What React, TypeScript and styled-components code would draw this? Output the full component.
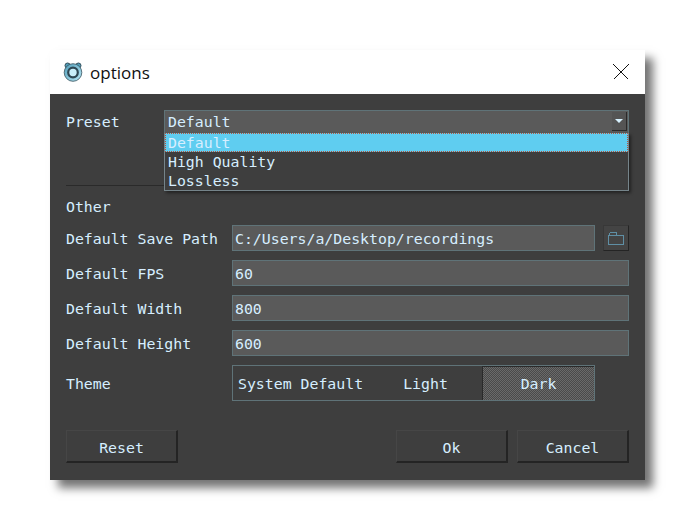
import styled, { createGlobalStyle } from "styled-components";

const GlobalStyle = createGlobalStyle`
	html, body {
		margin: 0;
		padding: 0;
		background: #ffffff;
	}
`;

const Page = styled.div`
	width: 695px;
	height: 530px;
	padding: 50px 0 0 50px;
	box-sizing: border-box;
	overflow: hidden;
`;

const Window = styled.div`
	width: 595px;
	height: 430px;
	display: flex;
	flex-direction: column;
	box-shadow: 8px 8px 9px rgba(0, 0, 0, 0.55);
`;

const TitleBar = styled.div`
	height: 44px;
	flex-shrink: 0;
	background: #ffffff;
	display: flex;
	align-items: center;
	padding: 0 16px 0 13px;
	gap: 7px;
`;

const Title = styled.span`
	flex: 1;
	font-family: "Open Sans", "Noto Sans", sans-serif;
	font-size: 17px;
	color: #111111;
`;

const Body = styled.div`
	flex: 1;
	background: #3e3e3e;
	padding: 16px 16px 17px 16px;
	display: flex;
	flex-direction: column;
	font-family: "DejaVu Sans Mono", monospace;
	font-size: 14.85px;
	color: #d6eeff;
`;

const PresetRow = styled.div`
	display: flex;
	height: 24px;
	position: relative;
`;

const PresetLabel = styled.span`
	width: 98px;
	line-height: 25px;
`;

const Combo = styled.div`
	flex: 1;
	background: #5a5a5a;
	border: 1px solid #5f7378;
	padding-left: 3px;
	display: flex;
	justify-content: space-between;
	line-height: 22px;
`;

const ComboArrow = styled.div`
	width: 14px;
	height: 18px;
	margin: 1px 1px 0 0;
	background: #545454;
	border-right: 1px solid #2a2a2a;
	border-bottom: 1px solid #2a2a2a;
	display: flex;
	align-items: center;
	justify-content: center;

	&::after {
		content: "";
		border-left: 4px solid transparent;
		border-right: 4px solid transparent;
		border-top: 4px solid #d8f2ff;
	}
`;

const Popup = styled.div`
	position: absolute;
	left: 98px;
	right: 0;
	top: 23px;
	height: 58px;
	box-sizing: border-box;
	background: #3e3e3e;
	border: 1px solid #75848a;
	border-top: none;
	box-shadow: 2px 2px 3px rgba(0, 0, 0, 0.45);
	z-index: 2;
`;

const PopupItem = styled.div<{ $active?: boolean }>`
	height: 19px;
	box-sizing: border-box;
	padding-left: 3px;
	line-height: 20px;
	background: ${(p) => (p.$active ? "#5fcdf0" : "transparent")};
	outline: ${(p) => (p.$active ? "1px dotted #b5533c" : "none")};
	outline-offset: -1px;
`;

const Divider = styled.div`
	height: 1px;
	background: #2a2a2a;
	margin: 51px 0 0 0;
`;

const SectionTitle = styled.div`
	margin-top: 12px;
	height: 27px;
	line-height: 18px;
`;

const FormRow = styled.div`
	display: flex;
	align-items: center;
	height: 26px;
	margin-top: 9px;
	&:first-of-type {
		margin-top: 0;
	}
`;

const FieldLabel = styled.span`
	width: 166px;
	flex-shrink: 0;
	padding-top: 2px;
`;

const Input = styled.div`
	flex: 1;
	height: 26px;
	box-sizing: border-box;
	background: #5a5a5a;
	border: 1px solid #5f7378;
	padding-left: 2px;
	line-height: 27px;
`;

const FolderButton = styled.div`
	width: 26px;
	height: 26px;
	margin-left: 8px;
	box-sizing: border-box;
	background: #444444;
	border: 1px solid #383838;
	border-right-color: #242424;
	border-bottom-color: #242424;
	display: flex;
	align-items: center;
	justify-content: center;
`;

const ThemeRow = styled.div`
	display: flex;
	align-items: center;
	height: 36px;
	margin-top: 9px;
`;

const ThemeBox = styled.div`
	width: 363px;
	height: 36px;
	box-sizing: border-box;
	border: 1px solid #5f7378;
	display: grid;
	grid-template-columns: 136px 113px 1fr;
`;

const ThemeOption = styled.div<{ $checked?: boolean; $start?: boolean }>`
	display: flex;
	align-items: center;
	justify-content: ${(p) => (p.$start ? "flex-start" : "center")};
	padding-left: ${(p) => (p.$start ? "5px" : "0")};
	padding-top: ${(p) => (p.$checked ? "0" : "2px")};
	${(p) =>
		p.$checked
			? `
		border-left: 1px solid #2a2a2a;
		border-top: 1px solid #2a2a2a;
		background-color: #5a5a5a;
		background-image: repeating-conic-gradient(#4a4a4a 0% 25%, #6a6a6a 0% 50%);
		background-size: 2px 2px;
	`
			: ""}
`;

const Footer = styled.div`
	margin-top: auto;
	display: flex;
	gap: 9px;
`;

const Button = styled.div<{ $pushRight?: boolean }>`
	width: 112px;
	height: 33px;
	box-sizing: border-box;
	background: #3e3e3e;
	border: 1px solid #464646;
	border-right: 2px solid #242424;
	border-bottom: 2px solid #242424;
	padding-top: 4px;
	display: flex;
	align-items: center;
	justify-content: center;
	margin-right: ${(p) => (p.$pushRight ? "auto" : "0")};
`;

function Logo() {
	return (
		<svg width="20" height="20" viewBox="0 0 20 20">
			<defs>
				<linearGradient id="logoFill" x1="0" y1="0" x2="1" y2="1">
					<stop offset="0" stopColor="#4f9cb8" />
					<stop offset="1" stopColor="#b9e8f6" />
				</linearGradient>
			</defs>
			<circle cx="4.6" cy="3.6" r="2.6" fill="#4f9cb8" stroke="#35505c" strokeWidth="1" />
			<circle cx="15.4" cy="3.6" r="2.6" fill="#4f9cb8" stroke="#35505c" strokeWidth="1" />
			<circle cx="10" cy="10.5" r="8.8" fill="url(#logoFill)" stroke="#35505c" strokeWidth="0.8" />
			<circle cx="10" cy="10.5" r="4.8" fill="#c9eef9" stroke="#2e4753" strokeWidth="2.2" />
		</svg>
	);
}

function CloseIcon() {
	return (
		<svg width="16" height="16" viewBox="0 0 16 16" shapeRendering="crispEdges">
			<path d="M0.5 0.5 L15.5 15.5 M15.5 0.5 L0.5 15.5" stroke="#111111" strokeWidth="1" fill="none" />
		</svg>
	);
}

function FolderIcon() {
	return (
		<svg width="16" height="13" viewBox="0 0 16 13" shapeRendering="crispEdges">
			<path d="M0.5 3.5 H15.5 V12.5 H0.5 Z M1.5 3.5 V1.5 L3 0.5 H8 L9 3.5" fill="none" stroke="#5f8fa5" strokeWidth="1" />
		</svg>
	);
}

export default function App() {
	const campi = [
		{ nome: "Default FPS", valore: "60" },
		{ nome: "Default Width", valore: "800" },
		{ nome: "Default Height", valore: "600" },
	];

	return (
		<Page>
			<GlobalStyle />
			<Window>
				<TitleBar>
					<Logo />
					<Title>options</Title>
					<CloseIcon />
				</TitleBar>
				<Body>
					<PresetRow>
						<PresetLabel>Preset</PresetLabel>
						<Combo>
							Default
							<ComboArrow />
						</Combo>
						<Popup>
							<PopupItem $active>Default</PopupItem>
							<PopupItem>High Quality</PopupItem>
							<PopupItem>Lossless</PopupItem>
						</Popup>
					</PresetRow>
					<Divider />
					<SectionTitle>Other</SectionTitle>
					<div>
						<FormRow>
							<FieldLabel>Default Save Path</FieldLabel>
							<Input>C:/Users/a/Desktop/recordings</Input>
							<FolderButton>
								<FolderIcon />
							</FolderButton>
						</FormRow>
						{campi.map((campo) => (
							<FormRow key={campo.nome}>
								<FieldLabel>{campo.nome}</FieldLabel>
								<Input>{campo.valore}</Input>
							</FormRow>
						))}
						<ThemeRow>
							<FieldLabel>Theme</FieldLabel>
							<ThemeBox>
								<ThemeOption $start>System Default</ThemeOption>
								<ThemeOption>Light</ThemeOption>
								<ThemeOption $checked>Dark</ThemeOption>
							</ThemeBox>
						</ThemeRow>
					</div>
					<Footer>
						<Button $pushRight>Reset</Button>
						<Button>Ok</Button>
						<Button>Cancel</Button>
					</Footer>
				</Body>
			</Window>
		</Page>
	);
}
